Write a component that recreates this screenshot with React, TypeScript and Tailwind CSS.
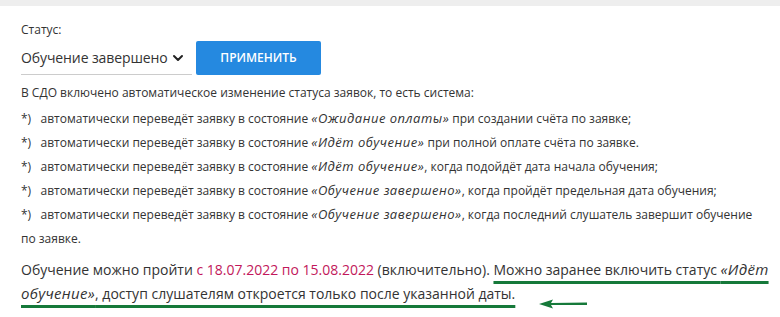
import { ChevronDown } from "lucide-react";

const items = [
  { before: "автоматически переведёт заявку в состояние ", status: "«Ожидание оплаты»", after: " при создании счёта по заявке;" },
  { before: "автоматически переведёт заявку в состояние ", status: "«Идёт обучение»", after: " при полной оплате счёта по заявке." },
  { before: "автоматически переведёт заявку в состояние ", status: "«Идёт обучение»", after: ", когда подойдёт дата начала обучения;" },
  { before: "автоматически переведёт заявку в состояние ", status: "«Обучение завершено»", after: ", когда пройдёт предельная дата обучения;" },
  { before: "автоматически переведёт заявку в состояние ", status: "«Обучение завершено»", after: ", когда последний слушатель завершит обучение по заявке." },
];

const App = () => {
  return (
    <div className="min-h-screen bg-white font-['Open_Sans',sans-serif] text-[#333]">
      <div className="h-[6px] bg-[#eeeeee]" />

      <div className="pl-[21px] pr-[10px] pt-[16px]">
        <p className="text-[12px] leading-[16px]">Статус:</p>

        <div className="mt-[3px] flex items-center gap-[4px]">
          <div className="flex h-[34px] w-[171px] items-center justify-between border-b border-[#cccccc] pr-[6px]">
            <span className="whitespace-nowrap text-[14px] tracking-[-0.1px]">Обучение завершено</span>
            <ChevronDown className="h-4 w-4 text-[#222]" strokeWidth={3} />
          </div>
          <button className="h-[34px] w-[125px] rounded-[2px] bg-[#2589e0] text-[12px] font-semibold text-white">
            ПРИМЕНИТЬ
          </button>
        </div>

        <div className="mt-[6px] w-[735px] text-[12px] leading-[24px]">
          <p className="mb-[2px]">В СДО включено автоматическое изменение статуса заявок, то есть система:</p>
          {items.map((item, i) => (
            <p key={i}>
              *)&nbsp;&nbsp;&nbsp;{item.before}
              <i className="text-[13px] leading-[16px] tracking-[0.5px]">{item.status}</i>
              {item.after}
            </p>
          ))}
        </div>

        <p className="mt-[7px] w-[752px] text-[14px] leading-[24px]">
          Обучение можно пройти <span className="text-[#c2185b]">с 18.07.2022 по 15.08.2022</span> (включительно).{" "}
          <span className="underline decoration-[#16793a] decoration-[3px] underline-offset-[6px]">
            Можно заранее включить статус <i className="text-[15px] leading-[18px] tracking-[0.3px]">«Идёт обучение»</i>, доступ слушателям откроется только после указанной даты.
          </span>
          <svg className="ml-[22px] inline-block align-[-10px]" width="52" height="10" viewBox="0 0 52 10">
            <path d="M2 5 L16 0.5 L14 4 L50 3.5 L50 6 L14 6 L16 9.5 Z" fill="#16793a" />
          </svg>
        </p>
      </div>
    </div>
  );
};

export default App;
